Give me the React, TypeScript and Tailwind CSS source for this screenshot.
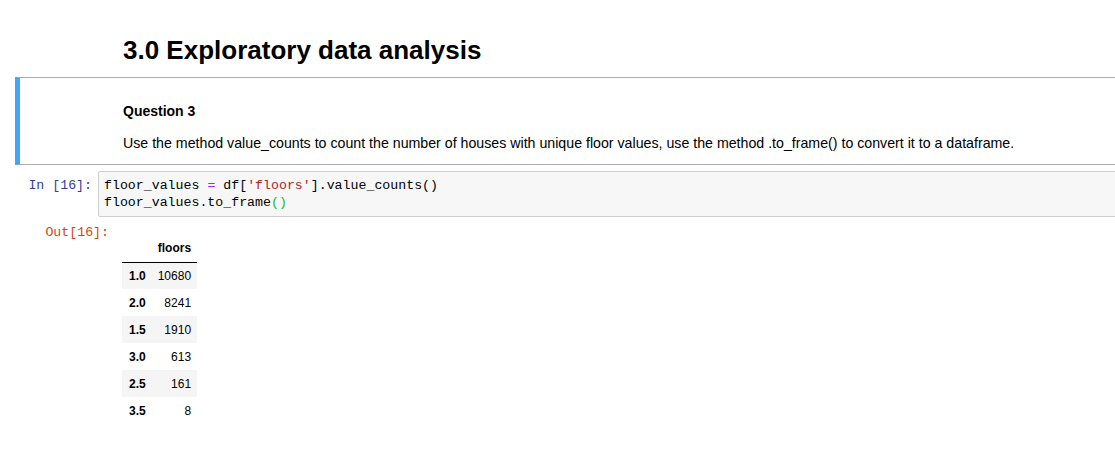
import React from 'react'

// Jupyter notebook fragment: markdown heading, a question cell, one code cell and its dataframe output.

const mono = "font-['Liberation_Mono','Courier_New',monospace] text-[13.25px] leading-[17px]"

const rows: [string, string][] = [
  ['1.0', '10680'],
  ['2.0', '8241'],
  ['1.5', '1910'],
  ['3.0', '613'],
  ['2.5', '161'],
  ['3.5', '8'],
]

function CodeCell() {
  return (
    <div className="mt-[6px] flex items-start">
      <div className={`${mono} w-[92px] shrink-0 pt-[6px] text-right text-[#303f9f]`}>In&nbsp;[16]:</div>
      <div className={`${mono} ml-[6px] flex-1 rounded-[2px] border border-[#cfcfcf] bg-[#f7f7f7] px-[5px] py-[5px] text-black`}>
        <div className="whitespace-pre">
          floor_values <span className="text-[#aa22ff]">=</span> df[<span className="text-[#ba2121]">'floors'</span>].value_counts()
        </div>
        <div className="whitespace-pre">
          floor_values.to_frame<span className="text-[#22b822]">()</span>
        </div>
      </div>
    </div>
  )
}

function OutputCell() {
  return (
    <div className="mt-[7px] flex items-start">
      <div className={`${mono} w-[109px] shrink-0 text-right text-[#d84315]`}>Out[16]:</div>
      <table className="mt-[11px] ml-[13px] border-collapse font-['Liberation_Sans',Arial,sans-serif] text-[12px] text-black">
        <thead>
          <tr className="border-b border-black">
            <th className="h-[27px] pr-[6px] pl-[7px] py-0" />
            <th className="h-[27px] px-[6px] py-0 text-right font-bold">floors</th>
          </tr>
        </thead>
        <tbody>
          {rows.map(([idx, val], i) => (
            <tr key={idx} className={i % 2 === 0 ? 'bg-[#f5f5f5]' : 'bg-white'}>
              <th className="h-[27px] pr-[6px] pl-[7px] py-0 text-right font-bold">{idx}</th>
              <td className="h-[27px] px-[6px] py-0 text-right">{val}</td>
            </tr>
          ))}
        </tbody>
      </table>
    </div>
  )
}

export default function App() {
  return (
    <div className="h-[450px] w-full overflow-hidden bg-white font-['Liberation_Sans',Arial,sans-serif] text-black">
      <div className="w-[1130px]">
        <h2 className="pt-[34px] pl-[123px] text-[26px] leading-[32px] font-bold">3.0 Exploratory data analysis</h2>

        <div className="mt-[11px] ml-[15px] border-y border-l-[5px] border-y-[#ababab] border-l-[#42a5f5] pt-[23px] pb-[11px] pl-[103px] text-[14px] leading-[20px]">
          <div className="font-bold">Question 3</div>
          <div className="mt-[12px] text-[14.2px]">
            Use the method value_counts to count the number of houses with unique floor values, use the method .to_frame() to convert it to a dataframe.
          </div>
        </div>

        <CodeCell />
        <OutputCell />
      </div>
    </div>
  )
}
